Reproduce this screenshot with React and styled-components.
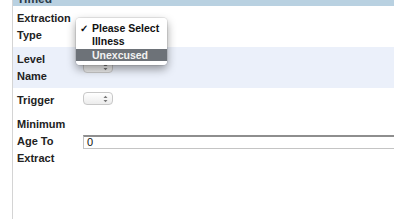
import React from "react";
import styled, { createGlobalStyle } from "styled-components";

const GlobalStyle = createGlobalStyle`
  html, body {
    margin: 0;
    padding: 0;
    background: #ffffff;
    overflow: hidden;
  }
  body {
    font-family: "Liberation Sans", Arial, sans-serif;
  }
`;

const Panel = styled.div`
  margin-left: 12px;
  border-left: 1px solid #d4d4d4;
  height: 219px;
  overflow: hidden;
`;

const Header = styled.div`
  height: 6px;
  overflow: hidden;
  background: #b9d1e1;
  padding-left: 4px;
  font-size: 12px;
  font-weight: bold;
  color: #2a3a48;
  line-height: 12px;

  span {
    display: block;
    margin-top: -7px;
  }
`;

const Row = styled.div`
  display: grid;
  grid-template-columns: 66px 1fr;
  align-items: center;
  padding: 4px 0 3px 4px;
  background: ${p => (p.$shaded ? "#ebf0fa" : "transparent")};
`;

const Label = styled.div`
  font-size: 11px;
  font-weight: bold;
  line-height: 17px;
  color: #222;
`;

const Value = styled.div`
  position: relative;
  display: flex;
  align-items: center;
  min-width: 0;
`;

const Stepper = styled.span`
  display: inline-flex;
  justify-content: flex-end;
  align-items: center;
  width: 28px;
  height: 11px;
  margin-top: ${p => p.$nudge || 0}px;
  border: 1px solid #c8c8c8;
  border-radius: 4px;
  background: linear-gradient(#ffffff, #ececec);
  box-sizing: content-box;

  svg {
    margin-right: 4px;
  }
`;

const TextInput = styled.div`
  flex: none;
  height: 11px;
  width: 340px;
  padding: 0 3px;
  border: 1px solid #c4c4c4;
  border-top: 2px solid #8e8e8e;
  font-size: 11px;
  line-height: 11px;
  color: #111;
  background: #fff;
`;

const Popup = styled.div`
  position: absolute;
  left: -7px;
  top: -3px;
  width: 91px;
  padding: 4px 0 4px;
  background: rgba(255, 255, 255, 0.97);
  border-radius: 4px;
  box-shadow: 0 4px 10px rgba(0, 0, 0, 0.4), 0 0 0 1px rgba(0, 0, 0, 0.08);
  z-index: 2;
`;

const Option = styled.div`
  display: flex;
  align-items: center;
  height: ${p => (p.$active ? 12 : 13)}px;
  padding-left: 4px;
  font-size: 10.5px;
  font-weight: bold;
  color: ${p => (p.$active ? "#f2f2f2" : "#111")};
  background: ${p => (p.$active ? "#6d7278" : "transparent")};
  margin-top: ${p => (p.$active ? 1 : 0)}px;
`;

const Check = styled.span`
  display: inline-block;
  width: 12px;
  font-size: 10px;
`;

const Arrows = () => (
  <svg width="5" height="8" viewBox="0 0 5 8">
    <path d="M0.5 3 L2.5 0.8 L4.5 3 Z" fill="#777" />
    <path d="M0.5 5 L2.5 7.2 L4.5 5 Z" fill="#777" />
  </svg>
);

const App = () => {
  return (
    <>
      <GlobalStyle />
      <Panel>
        <Header>
          <span>Timed</span>
        </Header>

        <Row>
          <Label>
            Extraction
            <br />
            Type
          </Label>
          <Value>
            <Stepper>
              <Arrows />
            </Stepper>
            <Popup>
              <Option>
                <Check>✓</Check>Please Select
              </Option>
              <Option>
                <Check />Illness
              </Option>
              <Option $active>
                <Check />Unexcused
              </Option>
            </Popup>
          </Value>
        </Row>

        <Row $shaded>
          <Label>
            Level
            <br />
            Name
          </Label>
          <Value>
            <Stepper $nudge={-3}>
              <Arrows />
            </Stepper>
          </Value>
        </Row>

        <Row>
          <Label>Trigger</Label>
          <Value>
            <Stepper $nudge={-4}>
              <Arrows />
            </Stepper>
          </Value>
        </Row>

        <Row>
          <Label>
            Minimum
            <br />
            Age To
            <br />
            Extract
          </Label>
          <Value>
            <TextInput>0</TextInput>
          </Value>
        </Row>
      </Panel>
    </>
  );
};

export default App;
